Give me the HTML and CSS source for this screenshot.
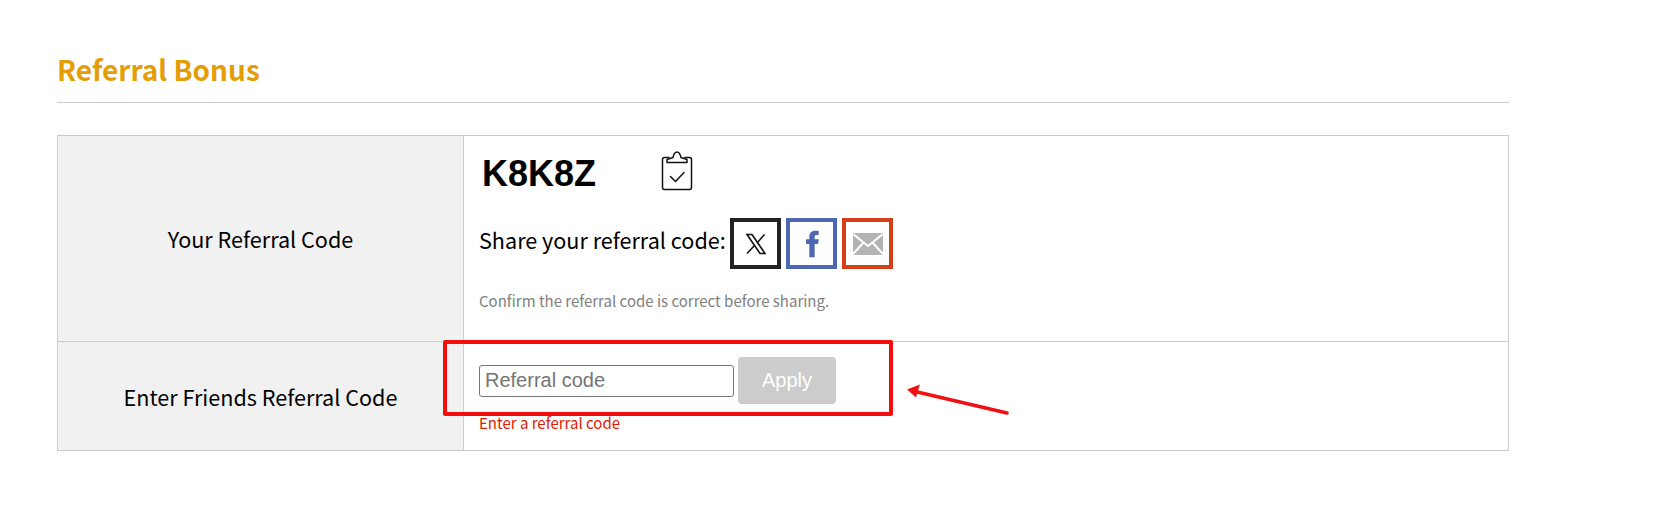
FILE: index.html
```html
<!DOCTYPE html>
<html lang="en">
<head>
  <meta charset="UTF-8">
  <meta name="viewport" content="width=device-width, initial-scale=1.0">
  <title>Referral Bonus</title>
  <link rel="stylesheet" href="styles.css">
</head>
<body>

  <div class="section">
    <h2 class="section-title">Referral Bonus</h2>

    <table class="referral-table">
      <tr class="row-code">
        <th>Your Referral Code</th>
        <td>
          <div class="code-line">
            <span class="code">K8K8Z</span>
            <svg class="copy-icon" width="32" height="40" viewBox="0 0 32 40" fill="none" stroke="#111" stroke-width="1.5" stroke-linejoin="round" stroke-linecap="round">
              <path d="M8 6.500H3.500A2 2 0 0 0 1.500 8.500v28a2 2 0 0 0 2 2h25a2 2 0 0 0 2-2v-28a2 2 0 0 0-2-2H24"/>
              <path d="M6 11.500V8.500L12 6.500C12.800 3 14.500 1 16 1s3.200 2 4 5.500l6 2v3z"/>
              <path d="M9.500 25.500l5 5 8.500-9"/>
            </svg>
          </div>
          <div class="share-line">
            <span class="share-label">Share your referral code:</span>
            <a class="share-btn share-x">
              <svg width="24" height="24" viewBox="0 0 24 24" fill="none" stroke="#111" stroke-width="1.600">
                <path d="M3 2.500h5L21 21.500h-5z"/>
                <path d="M20.500 2.500l-7.500 8.500M10.500 13.500L3 21.500"/>
              </svg>
            </a>
            <a class="share-btn share-fb">
              <svg width="32" height="32" viewBox="0 0 24 24" fill="#4e66b4"><path d="M14 8.500V6.500c0-.8.500-1.200 1.200-1.200H17V2h-2.700C11.600 2 10 3.800 10 6.300v2.200H7.500V12H10v10h4V12h2.600l.5-3.500z"/></svg>
            </a>
            <a class="share-btn share-mail">
              <svg width="30" height="22" viewBox="0 0 30 22"><rect width="30" height="22" fill="#b3b3b3"/><path d="M0 1l15 12L30 1M0 21l10.500-11.500M30 21L19.500 9.500" fill="none" stroke="#fff" stroke-width="2"/></svg>
            </a>
          </div>
          <p class="note">Confirm the referral code is correct before sharing.</p>
        </td>
      </tr>
      <tr class="row-enter">
        <th>Enter Friends Referral Code</th>
        <td>
          <div class="enter-line">
            <input class="code-input" type="text" placeholder="Referral code">
            <button class="apply-btn" disabled>Apply</button>
          </div>
          <p class="error">Enter a referral code</p>
        </td>
      </tr>
    </table>

    <!-- annotation drawn over the screenshot -->
    <div class="mark-box"></div>
    <svg class="mark-arrow" width="110" height="36" viewBox="0 0 110 36" fill="none">
      <path d="M102 32L8 10" stroke="#f01010" stroke-width="3.500" stroke-linecap="round"/>
      <path d="M2 8.500L15 3.500 12.500 11 11 16.500z" fill="#f01010"/>
    </svg>
  </div>

</body>
</html>
```

FILE: styles.css
```css
* {
  box-sizing: border-box;
  margin: 0;
  padding: 0;
}

body {
  font-family: "Noto Sans CJK JP", "Noto Sans", sans-serif;
  background-color: #fff;
  color: #000;
}

.section {
  position: relative;
  width: 1452px;
  margin-left: 57px;
  padding-top: 49px;
}

.section-title {
  height: 54px;
  font-size: 28px;
  line-height: 40px;
  font-weight: 700;
  color: #e49d06;
  border-bottom: 1px solid #ccc;
}

.referral-table {
  width: 100%;
  margin-top: 32px;
  border-collapse: collapse;
  table-layout: fixed;
}

.referral-table th,
.referral-table td {
  border: 1px solid #ccc;
}

.referral-table th {
  width: 406px;
  background: #f1f1f1;
  font-size: 21.600px;
  font-weight: 400;
  text-align: center;
}

.referral-table td {
  padding: 0 15px;
  vertical-align: top;
}

.row-code {
  height: 206px;
}

.row-enter {
  height: 109px;
}

.code-line {
  display: flex;
  align-items: center;
  height: 40px;
  margin-top: 15px;
  padding-left: 3px;
}

.code {
  width: 179px;
  padding-top: 6px;
  font-family: "Liberation Sans", Arial, sans-serif;
  font-size: 36px;
  font-weight: bold;
  line-height: 40px;
}

.copy-icon {
  display: block;
}

.share-line {
  display: flex;
  align-items: center;
  gap: 5px;
  margin-top: 27px;
}

.share-label {
  width: 246px;
  padding-bottom: 8px;
  font-size: 21.600px;
  line-height: 43px;
  white-space: nowrap;
}

.share-btn {
  display: flex;
  align-items: center;
  justify-content: center;
  width: 51px;
  height: 51px;
  border: 4px solid #222;
}

.share-fb {
  border-color: #4e66b4;
}

.share-mail {
  border-color: #d43f1a;
}

.note {
  margin-top: 20px;
  font-size: 15px;
  line-height: 24px;
  color: #808080;
}

.enter-line {
  display: flex;
  align-items: center;
  gap: 4px;
  margin-top: 15px;
}

.code-input {
  width: 255px;
  height: 32px;
  padding: 0 5px;
  font-family: "Liberation Sans", Arial, sans-serif;
  font-size: 20px;
  border: 1px solid #767676;
  border-radius: 3px;
  outline: none;
}

.code-input::placeholder {
  color: #757575;
}

.apply-btn {
  width: 98px;
  height: 47px;
  font-family: "Liberation Sans", Arial, sans-serif;
  font-size: 20px;
  color: #fff;
  background: #ccc;
  border: none;
  border-radius: 4px;
}

.error {
  margin-top: 8px;
  font-size: 15px;
  line-height: 22px;
  color: #e02000;
}

.mark-box {
  position: absolute;
  left: 386px;
  top: 340px;
  width: 450px;
  height: 76px;
  border: 4px solid #f50e0e;
  border-radius: 2px;
}

.mark-arrow {
  position: absolute;
  left: 848px;
  top: 381px;
}
```
